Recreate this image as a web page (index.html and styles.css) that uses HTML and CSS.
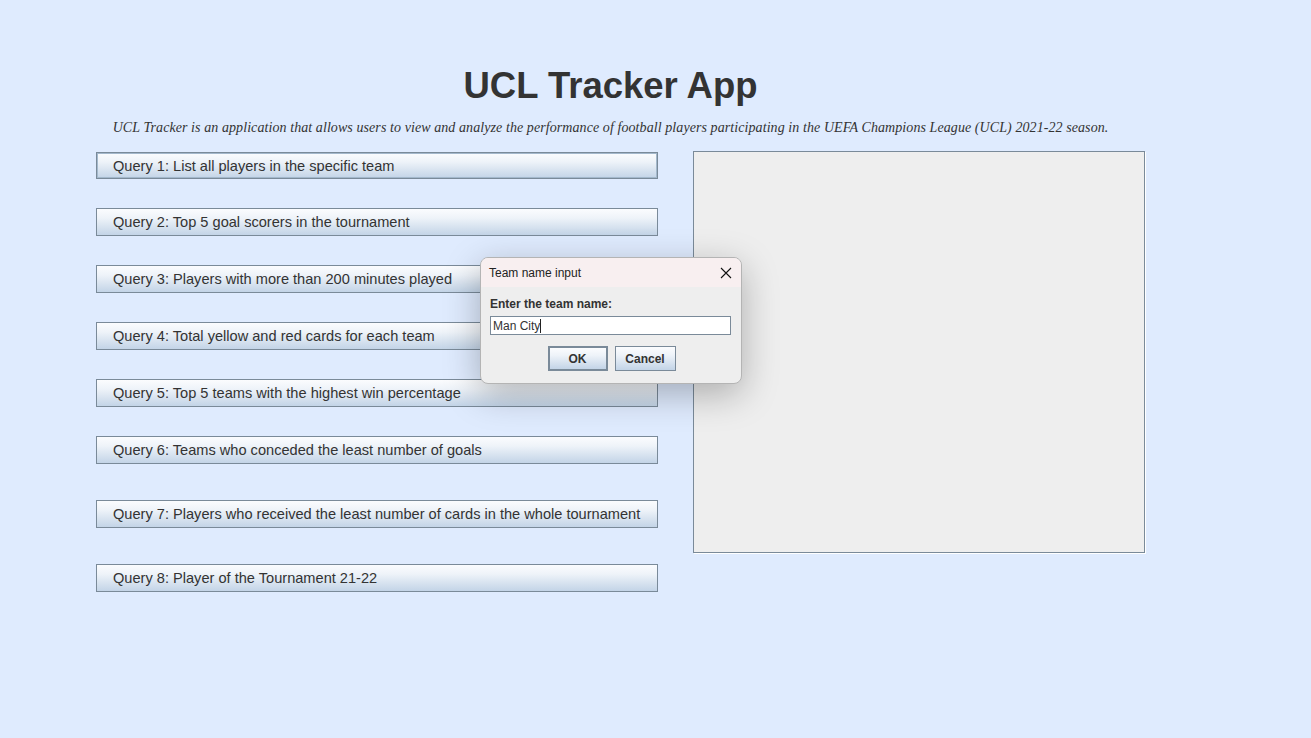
FILE: index.html
```html
<!DOCTYPE html>
<html>
<head>
  <title>UCL Tracker App</title>
  <link rel="stylesheet" href="styles.css">
</head>
<body>

<div class="app">
  <h1 class="title">UCL Tracker App</h1>
  <p class="intro">UCL Tracker is an application that allows users to view and analyze the performance of football players participating in the UEFA Champions League (UCL) 2021-22 season.</p>

  <div class="main">
    <div class="queries">
      <button class="query focused">Query 1: List all players in the specific team</button>
      <button class="query">Query 2: Top 5 goal scorers in the tournament</button>
      <button class="query">Query 3: Players with more than 200 minutes played</button>
      <button class="query">Query 4: Total yellow and red cards for each team</button>
      <button class="query">Query 5: Top 5 teams with the highest win percentage</button>
      <button class="query">Query 6: Teams who conceded the least number of goals</button>
      <button class="query far">Query 7: Players who received the least number of cards in the whole tournament</button>
      <button class="query far">Query 8: Player of the Tournament 21-22</button>
    </div>
    <div class="output"></div>
  </div>
</div>

<!-- team name prompt, floats over the page -->
<div class="dialog">
  <div class="dialog-head">
    <span>Team name input</span>
    <svg class="close" width="12" height="12" viewBox="0 0 12 12">
      <path d="M1 1 L11 11 M11 1 L1 11" stroke="#111" stroke-width="1.1" fill="none"/>
    </svg>
  </div>
  <div class="dialog-body">
    <label for="team">Enter the team name:</label>
    <div class="field">Man City<span class="caret"></span></div>
    <div class="dialog-buttons">
      <button class="btn default">OK</button>
      <button class="btn">Cancel</button>
    </div>
  </div>
</div>

</body>
</html>
```

FILE: styles.css
```css
body {
  margin: 0;
  background-color: #dfebfe;
  font-family: "Liberation Sans", Arial, sans-serif;
  color: #333;
}

.app {
  width: 1221px;
}

.title {
  margin: 65px 0 0;
  font-size: 36.5px;
  line-height: 42px;
  text-align: center;
  color: #333;
}

.intro {
  margin: 11px 0 0;
  font-family: "Liberation Serif", "Times New Roman", serif;
  font-style: italic;
  font-size: 14px;
  letter-spacing: 0.08px;
  line-height: 20px;
  text-align: center;
  color: #333;
}

.main {
  display: flex;
  gap: 35px;
  margin: 13px 0 0 96px;
}

.queries {
  display: flex;
  flex-direction: column;
  gap: 29px;
  padding-top: 1px;
}

.query {
  width: 562px;
  height: 28px;
  padding: 0 0 0 16px;
  text-align: left;
  font-family: "Liberation Sans", Arial, sans-serif;
  font-size: 14.6px;
  color: #333;
  background: linear-gradient(#fbfcfe, #eef3f9 35%, #c3d4e7);
  border: 1px solid #7a8a99;
  cursor: pointer;
}

.query.focused {
  height: 27px;
  box-shadow: inset 0 0 0 1px #a3b8cc;
}

.query.far {
  margin-top: 7px;
}

.output {
  width: 450px;
  height: 400px;
  background-color: #eeeeee;
  border: 1px solid #7a8a99;
  box-shadow: 1px 1px 0 #fff;
}

.dialog {
  position: absolute;
  left: 480px;
  top: 257px;
  width: 260px;
  height: 125px;
  border: 1px solid #b4b4b4;
  border-radius: 8px;
  background-color: #eeeeee;
  overflow: hidden;
  box-shadow: 0 10px 36px rgba(0, 0, 0, 0.28);
  font-size: 12px;
  color: #222;
}

.dialog-head {
  display: flex;
  align-items: center;
  justify-content: space-between;
  height: 29px;
  padding: 0 9px 0 8px;
  background-color: #f8eff0;
}

.dialog-body {
  display: flex;
  flex-direction: column;
  padding: 10px 10px 0 9px;
}

.dialog-body label {
  font-weight: bold;
  color: #333;
  line-height: 15px;
}

.field {
  display: flex;
  align-items: center;
  margin-top: 4px;
  width: 241px;
  height: 19px;
  box-sizing: border-box;
  padding: 0 2px;
  border: 1px solid #7a8a99;
  font-size: 12px;
  color: #333;
  background: #fff;
}

.caret {
  width: 1px;
  height: 14px;
  background: #222;
}

.dialog-buttons {
  display: flex;
  justify-content: center;
  gap: 7px;
  margin-top: 11px;
  padding-left: 2px;
}

.btn {
  width: 61px;
  height: 25px;
  padding: 0;
  font-family: "Liberation Sans", Arial, sans-serif;
  font-size: 12px;
  font-weight: bold;
  color: #333;
  background: linear-gradient(#fbfcfe, #eef3f9 35%, #c3d4e7);
  border: 1px solid #7a8a99;
}

.btn.default {
  width: 60px;
  border: 2px solid #7a8a99;
}
```
